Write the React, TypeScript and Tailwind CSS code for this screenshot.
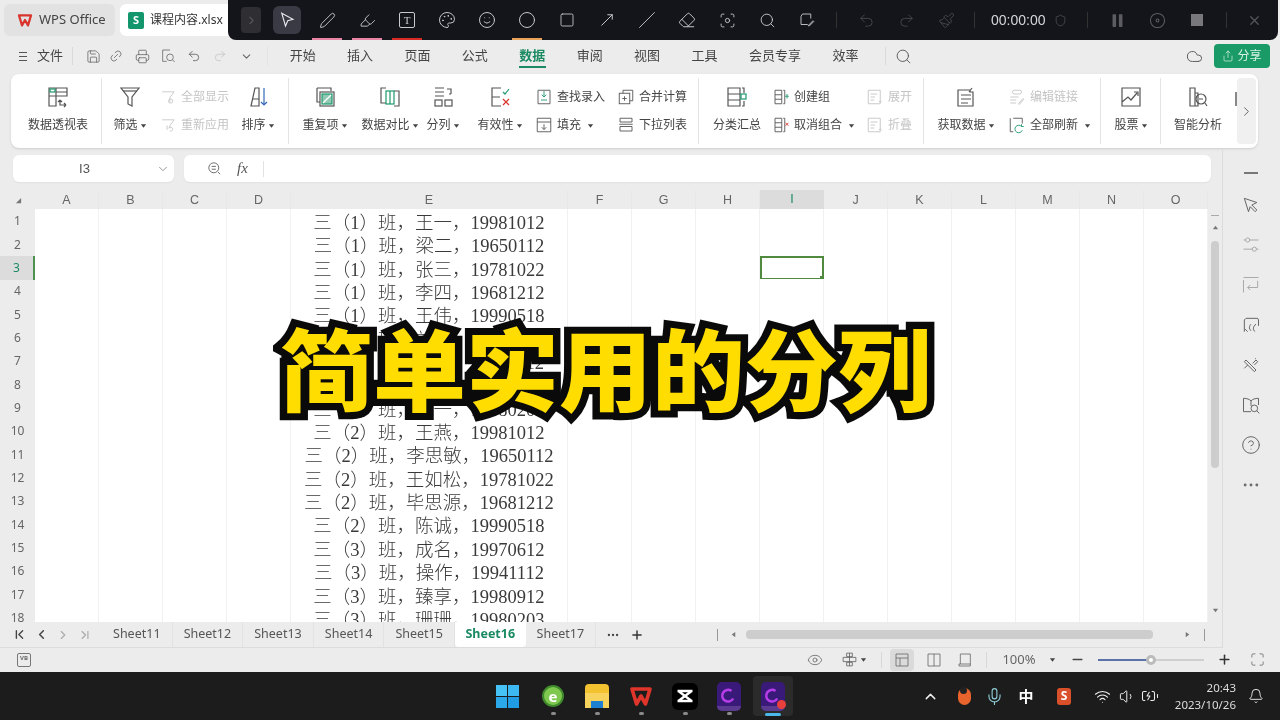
import type { ReactNode } from 'react';
import {
  Bell, ChevronDown, ChevronFirst, ChevronLast, ChevronLeft, ChevronRight, ChevronUp, Circle, CircleHelp, Eye, Focus, Maximize,
  Mic, Minus, MoveUpRight, Palette, Paintbrush, Pause, Pen, Plus, Printer, Redo2, Save, Search, Share, Shield,
  Slash, Smile, Square, Undo2, Volume1, Wifi, X, Highlighter, Eraser, Disc, Link2, Ellipsis, BatteryCharging, Cloud,
} from 'lucide-react';

const Ico = ({ children, s = 24, className = '' }: { children: ReactNode; s?: number; className?: string }) => (
  <svg viewBox="0 0 24 24" width={s} height={s} fill="none" stroke="currentColor" strokeWidth={1.2} className={className}>
    {children}
  </svg>
);

const Caret = () => (
  <svg viewBox="0 0 8 8" width={7} height={7} className="ml-[2px] shrink-0 text-[#444]">
    <path d="M1 2.5h6L4 6.5z" fill="currentColor" />
  </svg>
);

const Large = ({ w, icon, label, caret }: { w: string; icon: ReactNode; label: string; caret?: boolean }) => (
  <div className={`${w} shrink-0 flex flex-col items-center`}>
    <div className="h-[24px] mt-[7px] flex items-center justify-center text-[#555]">{icon}</div>
    <div className="mt-[8px] flex items-center text-[12px] leading-[16px] text-[#444] whitespace-nowrap">
      {label}
      {caret && <Caret />}
    </div>
  </div>
);

const Small = ({ icon, label, caret, off }: { icon: ReactNode; label: string; caret?: boolean; off?: boolean }) => (
  <div className={`h-[28px] flex items-center gap-[4px] whitespace-nowrap text-[12px] ${off ? 'text-[#c4c4c4]' : 'text-[#444]'}`}>
    <span className={`w-[18px] flex justify-center ${off ? 'text-[#c4c4c4]' : 'text-[#555]'}`}>{icon}</span>
    {label}
    {caret && <Caret />}
  </div>
);

const Stack = ({ w, pl, children }: { w: string; pl: string; children: ReactNode }) => (
  <div className={`${w} ${pl} shrink-0 flex flex-col pt-[5px]`}>{children}</div>
);

const Group = ({ w, last, children }: { w: string; last?: boolean; children: ReactNode }) => (
  <div className={`${w} shrink-0 h-[66px] self-center flex ${last ? '' : 'border-r border-[#e4e4e4]'}`}>{children}</div>
);

const Pivot = () => (
  <Ico>
    <path d="M3 3h18v8H3zM3 3v18h7V3M10 7h11M14 15v5h6M20 20l-2-2M20 20l-2 2M14 15l2 2M14 15l-2 2" />
    <rect x="4" y="4" width="5" height="3" stroke="#1d9a6c" />
  </Ico>
);
const Funnel = ({ extra }: { extra?: ReactNode }) => (
  <Ico>
    <path d="M3 3h18l-7 9v9l-4-2v-7z" />
    {extra}
  </Ico>
);
const ColBars = ({ extra }: { extra: ReactNode }) => (
  <Ico s={20}>
    <path d="M4 3h9v18H4zM4 9h9M4 15h9M15 3h2v18h-2" />
    {extra}
  </Ico>
);
const Doc = ({ extra }: { extra: ReactNode }) => (
  <Ico s={18}>
    <path d="M3 3h16v18H3zM6 8h9M6 12h6M6 16h5" />
    {extra}
  </Ico>
);

const rows = [
  '三（1）班，王一，19981012', '三（1）班，梁二，19650112', '三（1）班，张三，19781022', '三（1）班，李四，19681212',
  '三（1）班，王伟，19990518', '三（1）班，刘洋，19970612', '三（2）班，赵敏，19941112', '三（2）班，孙立，19980912',
  '三（2）班，丁一，19980203', '三（2）班，王燕，19981012', '三（2）班，李思敏，19650112', '三（2）班，王如松，19781022',
  '三（2）班，毕思源，19681212', '三（2）班，陈诚，19990518', '三（3）班，成名，19970612', '三（3）班，操作，19941112',
  '三（3）班，臻享，19980912', '三（3）班，珊珊，19980203',
];
const cols = ['A', 'B', 'C', 'D', 'E', 'F', 'G', 'H', 'I', 'J', 'K', 'L', 'M', 'N', 'O'];
const gridCols = 'grid grid-cols-[35px_64px_64px_64px_64px_277px_64px_64px_64px_64px_64px_64px_64px_64px_64px_64px]';
const sheets = ['Sheet11', 'Sheet12', 'Sheet13', 'Sheet14', 'Sheet15', 'Sheet16', 'Sheet17'];
const menus: [string, string][] = [
  ['开始', 'w-[57.4px]'], ['插入', 'w-[57.4px]'], ['页面', 'w-[57.4px]'], ['公式', 'w-[57.4px]'], ['数据', 'w-[57.4px]'],
  ['审阅', 'w-[57.4px]'], ['视图', 'w-[57.4px]'], ['工具', 'w-[57.4px]'], ['会员专享', 'w-[84px]'], ['效率', 'w-[57px]'],
];

const Tool = ({ children, mark }: { children: ReactNode; mark?: string }) => (
  <div className="relative w-[40px] h-[40px] flex items-center justify-center">
    {children}
    {mark && <span className={`absolute bottom-0 left-[5px] right-[5px] h-[2px] ${mark}`} />}
  </div>
);

const TopBar = () => (
  <div className="absolute left-[228px] top-0 w-[1050px] h-[40px] bg-[#14141b] rounded-b-lg flex items-center pl-[13px] text-[#c9c9cf]">
    <div className="w-[20px] h-[26px] mr-[6px] rounded bg-[#2e2e33] flex items-center justify-center text-[#55555a]">
      <ChevronRight size={13} />
    </div>
    <div className="w-[40px] h-[40px] flex items-center justify-center">
      <div className="w-[28px] h-[28px] rounded-md bg-[#3a3a44] flex items-center justify-center">
        <svg viewBox="0 0 24 24" width={18} height={18} fill="none" stroke="#e8e8ee" strokeWidth={1.5}><path d="M5 3l15 8-7 2-3 7z" /></svg>
      </div>
    </div>
    <Tool mark="bg-[#e986a6]"><Pen size={17} strokeWidth={1.3} /></Tool>
    <Tool mark="bg-[#e986a6]"><Highlighter size={17} strokeWidth={1.3} /></Tool>
    <Tool mark="bg-[#d92b25]">
      <div className="w-[16px] h-[16px] border border-[#c9c9cf] rounded-[2px] flex items-center justify-center text-[11px] leading-none font-['Liberation_Serif',serif]">T</div>
    </Tool>
    <Tool><Palette size={18} strokeWidth={1.3} /></Tool>
    <Tool><Smile size={18} strokeWidth={1.3} /></Tool>
    <Tool mark="bg-[#e9a45a]"><Circle size={18} strokeWidth={1.3} /></Tool>
    <Tool><Square size={16} strokeWidth={1.3} /></Tool>
    <Tool><MoveUpRight size={18} strokeWidth={1.3} /></Tool>
    <Tool><Slash size={18} strokeWidth={1.2} /></Tool>
    <Tool><Eraser size={18} strokeWidth={1.3} /></Tool>
    <Tool><Focus size={17} strokeWidth={1.3} /></Tool>
    <Tool><Search size={17} strokeWidth={1.3} /></Tool>
    <Tool>
      <Ico s={18}><path d="M6 4h11v6M6 4 4 7v11h9M14 19l6-6 1 1-6 6h-1z" /></Ico>
    </Tool>
    <div className="w-px h-[16px] bg-[#333] mx-[9px]" />
    <div className="flex text-[#47474d]">
      <Tool><Undo2 size={17} strokeWidth={1.3} /></Tool>
      <Tool><Redo2 size={17} strokeWidth={1.3} /></Tool>
      <Tool><Paintbrush size={17} strokeWidth={1.3} /></Tool>
    </div>
    <div className="w-px h-[16px] bg-[#333] ml-[8px] mr-[16px]" />
    <span className="text-[14px] text-[#d6d6da] font-['Liberation_Sans',sans-serif] w-[58px]">00:00:00</span>
    <Shield size={13} className="ml-[5px] text-[#55555a]" strokeWidth={1.3} />
    <div className="w-px h-[16px] bg-[#333] ml-[20px] mr-[9px]" />
    <div className="flex text-[#5c5c62]">
      <Tool><Pause size={17} fill="currentColor" strokeWidth={0} /></Tool>
      <Tool><Disc size={17} strokeWidth={1.5} /></Tool>
      <Tool><div className="w-[12px] h-[12px] bg-[#77777c]" /></Tool>
    </div>
    <div className="w-px h-[16px] bg-[#333] ml-[9px] mr-[7px]" />
    <Tool><X size={15} className="text-[#55555a]" /></Tool>
  </div>
);

const TitleRow = () => (
  <div className="h-[38px] flex items-end pl-[4px] gap-[5px]">
    <div className="w-[111px] h-[32px] mb-[2px] bg-[#e2e2e2] rounded-md flex items-center pl-[13px] gap-[6px] text-[13px] text-[#444]">
      <svg viewBox="0 0 24 24" width={16} height={16} fill="none" stroke="#d9352d" strokeWidth={3.4} strokeLinejoin="round"><path d="M3 5h18l-4.5 15-4.5-8-4.5 8z" /></svg>
      WPS Office
    </div>
    <div className="w-[115px] h-[32px] mb-[2px] bg-white rounded-md flex items-center pl-[8px] gap-[6px] text-[12px] text-[#333]">
      <div className="w-[16px] h-[17px] rounded-[2px] bg-[#14966d] text-white text-[11px] font-bold flex items-center justify-center">S</div>
      课程内容.xlsx
    </div>
  </div>
);

const MenuRow = () => (
  <div className="h-[36px] flex items-center relative text-[13px] text-[#444]">
    <div className="w-[18px] ml-[19px] flex flex-col gap-[3px]">
      <span className="w-[8px] h-px bg-[#555]" /><span className="w-[8px] h-px bg-[#555]" /><span className="w-[8px] h-px bg-[#555]" />
    </div>
    <span className="w-[35px]">文件</span>
    <div className="w-px h-[18px] bg-[#dadada]" />
    <div className="flex items-center text-[#666]">
      <span className="w-[20px] ml-[10px] flex justify-center"><Save size={15} strokeWidth={1.3} /></span>
      <span className="w-[26px] flex justify-center"><Link2 size={14} strokeWidth={1.3} className="-rotate-45" /></span>
      <span className="w-[26px] flex justify-center"><Printer size={15} strokeWidth={1.3} /></span>
      <span className="w-[26px] flex justify-center">
        <Ico s={16}><path d="M15 3H4v17h6" /><circle cx="15" cy="14" r="5" /><path d="m19 18 3 3" /></Ico>
      </span>
      <span className="w-[26px] flex justify-center"><Undo2 size={14} strokeWidth={1.5} /></span>
      <span className="w-[26px] flex justify-center text-[#c2c2c2]"><Redo2 size={14} strokeWidth={1.3} /></span>
      <span className="w-[26px] flex justify-center"><ChevronDown size={13} /></span>
    </div>
    <div className="w-px h-[18px] bg-[#e2e2e2] ml-[8px] mr-[6px]" />
    {menus.map(([m, w]) => (
      <div key={m} className={`${w} h-full relative flex items-center justify-center ${m === '数据' ? 'text-[#1a8a63] font-bold' : ''}`}>
        {m}
        {m === '数据' && <span className="absolute bottom-[6px] left-[15px] w-[27px] h-[2px] bg-[#1a8a63]" />}
      </div>
    ))}
    <div className="w-px h-[18px] bg-[#dadada] ml-[11px]" />
    <Search size={17} strokeWidth={1.3} className="ml-[9px] text-[#555]" />
    <div className="ml-auto flex items-center gap-[11px] pr-[10px]">
      <Cloud size={17} strokeWidth={1.3} className="text-[#555]" />
      <div className="w-[56px] h-[24px] rounded bg-[#199a67] text-[#d9f2e6] text-[12px] flex items-center justify-center gap-[3px]">
        <Share size={12} strokeWidth={1.4} />分享
      </div>
    </div>
  </div>
);

const Ribbon = () => (
  <div className="mx-[11px] w-[1247px] h-[74px] bg-white rounded-lg shadow-sm flex">
    <Group w="w-[91px]">
      <Large w="w-[96px] -ml-[1px] -mr-[4px]" icon={<Pivot />} label="数据透视表" />
    </Group>
    <Group w="w-[187px]">
      <Large w="w-[56px]" icon={<Funnel extra={<path d="M5 6h14" />} />} label="筛选" caret />
      <Stack w="w-[76px]" pl="pl-[1px]">
        <Small off icon={<Ico s={17}><path d="M3 4h17l-6 8v7" /><circle cx="15" cy="17" r="3" /></Ico>} label="全部显示" />
        <Small off icon={<Ico s={17}><path d="M3 4h17l-6 8v4M10 12v6" /><path d="M14 20a3 3 0 1 0-2-4" /></Ico>} label="重新应用" />
      </Stack>
      <Large w="w-[48px]" icon={<Ico><path d="M9 3h4v18H5zM6 14h7" /><path d="M18 3v17M15 17l3 3 3-3" stroke="#3569b8" /></Ico>} label="排序" caret />
    </Group>
    <Group w="w-[410px]">
      <Large w="w-[72px]" icon={<Ico><path d="M4 3h14v3M4 3v14h3" /><rect x="7" y="7" width="14" height="14" /><rect x="9" y="9" width="10" height="10" fill="#8fc9b3" stroke="#1d9a6c" /><path d="m10 18 8-8" stroke="#fff" /></Ico>} label="重复项" caret />
      <Large w="w-[58px]" icon={<Ico><path d="M8 3H3v15h5M16 6h5v15h-5" /><rect x="8" y="6" width="8" height="13" stroke="#1d9a6c" /><path d="M12 6v13" stroke="#1d9a6c" /></Ico>} label="数据对比" caret />
      <Large w="w-[48px]" icon={<Ico><path d="M4 3h9M4 7h9M4 11h9M16 4h4v5M18 9h2" /><rect x="4" y="15" width="7" height="6" /><rect x="14" y="15" width="7" height="6" /></Ico>} label="分列" caret />
      <Large w="w-[66px]" icon={<Ico><path d="M13 3H4v18h9M4 12h8" /><path d="m15 7 2 2 4-5" stroke="#1d9a6c" /><path d="m15 14 6 6M21 14l-6 6" stroke="#d9352d" /></Ico>} label="有效性" caret />
      <Stack w="w-[82px]" pl="pl-[2px]">
        <Small icon={<Ico s={18}><path d="M4 3h16v18H4z" /><path d="M12 4v8M9 9l3 3 3-3M8 16h8" stroke="#1d9a6c" /></Ico>} label="查找录入" />
        <Small icon={<Ico s={18}><path d="M3 3h18v18H3zM3 8h18M12 11v7M9 15l3 3 3-3" /></Ico>} label="填充" caret />
      </Stack>
      <Stack w="w-[84px]" pl="pl-[2px]">
        <Small icon={<Ico s={18}><path d="M8 7V3h13v14h-4" /><rect x="3" y="7" width="14" height="14" /><path d="M10 11v6M7 14h6" /></Ico>} label="合并计算" />
        <Small icon={<Ico s={18}><path d="M4 3h16v5H4zM3 11h18M4 14h16v6H4z" /></Ico>} label="下拉列表" />
      </Stack>
    </Group>
    <Group w="w-[225px]">
      <Large w="w-[76px]" icon={<Ico><path d="M3 3h12v18H3zM3 9h12M3 15h12M17 3h2v5M19 16v5h-2" /><rect x="16" y="9" width="5" height="5" stroke="#1d9a6c" /></Ico>} label="分类汇总" />
      <Stack w="w-[94px] -ml-[3px]" pl="pl-[0px]">
        <Small icon={<ColBars extra={<path d="M20 8v6M17.5 11h5" stroke="#1d9a6c" />} />} label="创建组" />
        <Small icon={<ColBars extra={<path d="m18 9 4 4M22 9l-4 4" stroke="#d9352d" />} />} label="取消组合" caret />
      </Stack>
      <Stack w="w-[58px]" pl="pl-[0px]">
        <Small off icon={<Doc extra={<path d="m17 17 2 2 2-2" />} />} label="展开" />
        <Small off icon={<Doc extra={<path d="m17 19 2-2 2 2" />} />} label="折叠" />
      </Stack>
    </Group>
    <Group w="w-[177px]">
      <Large w="w-[84px]" icon={<Ico><path d="M4 5h12v2h3v14H4zM7 10h10M7 14h10M7 18h7M15 7l3-4" /></Ico>} label="获取数据" caret />
      <Stack w="w-[93px]" pl="pl-[0px]">
        <Small off icon={<Ico s={18}><rect x="6" y="3" width="12" height="5" rx="2.5" /><path d="M3 12h11M3 16h8M3 20h8M14 21l6-7 1 1-6 7z" /></Ico>} label="编辑链接" />
        <Small icon={<Ico s={18}><path d="M3 3v18h4M7 3h12v7" /><path d="M18 14a5 5 0 1 0 1 5M18 11v3h3" stroke="#1d9a6c" /></Ico>} label="全部刷新" caret />
      </Stack>
    </Group>
    <Group w="w-[60px]">
      <Large w="w-[60px]" icon={<Ico><path d="M3 3h18v18H3zM3 17l6-5 3 3 6-7M15 7h4v4" /></Ico>} label="股票" caret />
    </Group>
    <Group w="w-[76px]" last>
      <Large w="w-[74px]" icon={<Ico><path d="M4 3h5v18H4zM9 8h3v13H9" /><circle cx="15" cy="14" r="5" /><path d="M13 14h4M19 18l2 3" /></Ico>} label="智能分析" />
      <div className="w-[2px] h-[14px] mt-[14px] bg-[#888]" />
    </Group>
    <div className="w-[19px] h-[66px] self-center bg-[#f0f0f0] rounded flex items-center justify-center text-[#555]">
      <ChevronRight size={15} strokeWidth={1.4} />
    </div>
  </div>
);

const FormulaRow = () => (
  <div className="flex h-[27px] mt-[7px] ml-[13px] gap-[10px] text-[#555]">
    <div className="w-[161px] bg-white rounded-md shadow-xs relative flex items-center justify-center pr-[18px] text-[13px] font-['Liberation_Sans',sans-serif]">
      I3
      <ChevronDown size={14} strokeWidth={1.3} className="absolute right-[4px] text-[#777]" />
    </div>
    <div className="w-[1027px] bg-white rounded-md shadow-xs flex items-center pl-[22px]">
      <Ico s={17}><circle cx="11" cy="11" r="7" /><path d="M8 9h6M8 13h6M17 17l3 3" /></Ico>
      <span className="ml-[14px] w-[26px] italic text-[15px] font-['Liberation_Serif',serif]">fx</span>
      <span className="w-px h-[16px] bg-[#e2e2e2]" />
    </div>
  </div>
);

const Sheet = () => (
  <div className="flex flex-col">
    <div className={`${gridCols} h-[19px] mt-[8px] text-[12.5px] text-[#666] items-stretch font-['Liberation_Sans',sans-serif]`}>
      <div className="flex items-center justify-center pl-[2px]">
        <svg viewBox="0 0 8 8" width={7} height={7}><path d="M7 1v6H1z" fill="#777" /></svg>
      </div>
      {cols.map((c) => (
        <div key={c} className={c === 'I' ? 'flex items-center justify-center bg-[#dcdcdc] text-[#1a8a63] border-b-2 border-[#4f9150]' : 'flex items-center justify-center border-r border-[#e8e8e8]'}>{c}</div>
      ))}
    </div>
    <div className="h-[413px] overflow-hidden">
      {rows.map((r, i) => (
        <div key={r} className={`${gridCols} h-[23.35px]`}>
          <div className={`flex items-center justify-center text-[12px] font-['Noto_Sans',sans-serif] ${i === 2 ? 'bg-[#dcdcdc] text-[#1a8a63] border-r-2 border-[#4f9150]' : 'text-[#666]'}`}>{i + 1}</div>
          {cols.map((c) => (
            <div key={c} className={i === 2 && c === 'I' ? 'relative bg-white border-2 border-[#4f8a3f]' : 'relative bg-white border-r border-b border-[#f1f1f1]'}>
              {c === 'E' && (
                <div className="h-full pt-[5px] flex items-center justify-center text-[18.5px] leading-none whitespace-nowrap font-light text-[#3a3a3a] font-['Liberation_Serif','Noto_Sans_CJK_SC',serif]">{r}</div>
              )}
              {i === 2 && c === 'I' && <span className="absolute -right-[2px] -bottom-[2px] w-[4px] h-[4px] bg-[#4f8a3f]" />}
            </div>
          ))}
        </div>
      ))}
    </div>
  </div>
);

const VScroll = () => (
  <div className="w-[14px] mt-[8px] flex flex-col items-center text-[#777]">
    <div className="h-[18px]" />
    <span className="w-[8px] h-px bg-[#aaa] mt-[7px]" />
    <svg viewBox="0 0 8 8" width={7} height={7} className="mt-[8px]"><path d="M1 6h6L4 2z" fill="currentColor" /></svg>
    <div className="w-[8px] h-[227px] mt-[10px] rounded bg-[#cdcdcd]" />
    <svg viewBox="0 0 8 8" width={7} height={7} className="mt-[139px]"><path d="M1 2h6L4 6z" fill="currentColor" /></svg>
  </div>
);

const SheetTabs = () => (
  <div className="h-[26px] flex items-center border-b border-[#dcdcdc] text-[12.5px] text-[#555] font-['Noto_Sans',sans-serif]">
    <div className="w-[102px] flex items-center pl-[8px]">
      <span className="w-[22px] flex justify-center text-[#444]"><ChevronFirst size={15} strokeWidth={2.2} /></span>
      <span className="w-[22px] flex justify-center text-[#444]"><ChevronLeft size={15} strokeWidth={2.4} /></span>
      <span className="w-[22px] flex justify-center text-[#aaa]"><ChevronRight size={14} /></span>
      <span className="w-[22px] flex justify-center text-[#aaa]"><ChevronLast size={14} /></span>
    </div>
    {sheets.map((s) => (
      <div key={s} className={`w-[70.6px] h-full flex items-center justify-center ${s === 'Sheet16' ? 'bg-white rounded-b text-[#1a8a63] font-bold' : 'border-r border-[#e2e2e2]'}`}>{s}</div>
    ))}
    <Ellipsis size={14} className="ml-[10px] text-[#444]" />
    <Plus size={14} strokeWidth={2.5} className="ml-[10px] text-[#333]" />
    <span className="w-px h-[12px] bg-[#999] ml-[73px]" />
    <svg viewBox="0 0 8 8" width={7} height={7} className="ml-[12px]"><path d="M6 1v6L2 4z" fill="#777" /></svg>
    <div className="w-[407px] h-[9px] ml-[9px] rounded bg-[#cdcdcd]" />
    <svg viewBox="0 0 8 8" width={7} height={7} className="ml-[31px]"><path d="M2 1v6l4-3z" fill="#777" /></svg>
    <span className="w-px h-[12px] bg-[#999] ml-[13px]" />
  </div>
);

const SidePanel = () => (
  <div className="w-[57px] border-l border-[#dcdcdc] flex flex-col items-center text-[#666]">
    <span className="w-[14px] h-[1.5px] bg-[#777] mt-[24px]" />
    <div className="mt-[11px] flex flex-col">
      {[
        <Ico s={20}><path d="M4 4l15 5-6 3 6 6-2 2-6-6-2 6z" /></Ico>,
        <Ico s={20} className="text-[#aaa]"><path d="M3 6h18M3 17h18" /><circle cx="8" cy="6" r="2.5" fill="#ececec" /><circle cx="16" cy="17" r="2.5" fill="#ececec" /></Ico>,
        <Ico s={20} className="text-[#aaa]"><path d="M3 3h18M3 6v15M20 7v8H8M11 12l-3 3 3 3" /></Ico>,
        <Ico s={20}><path d="M4 20V6l2-2h14l1 2v7M8 20l-3-3M12 19c-3-3-2-6 0-8M17 20c-3-2-3-6 1-9" /></Ico>,
        <Ico s={20}><path d="m6 6 12 12-2 2L4 8zM14 10l4-4 2 2-4 4M4 16l4-4M17 4l1 1" /></Ico>,
        <Ico s={20}><path d="M3 4c4 0 7 1 9 3 2-2 5-3 9-3v8M12 7v6M3 4v16h9" /><circle cx="16" cy="16" r="4" /><path d="m19 19 3 3" /></Ico>,
        <CircleHelp size={20} strokeWidth={1.2} />,
        <Ellipsis size={20} strokeWidth={1.4} />,
      ].map((ic, i) => (
        <div key={i} className="h-[40px] flex items-center justify-center">{ic}</div>
      ))}
    </div>
  </div>
);

const StatusBar = () => (
  <div className="h-[22px] pt-[1px] flex items-center text-[#666] text-[13px] font-['Noto_Sans',sans-serif]">
    <div className="w-[14px] h-[14px] ml-[17px] border border-[#777] rounded-[2px] text-[6px] leading-none font-bold flex justify-center pt-[1px]">VB</div>
    <Eye size={16} strokeWidth={1.2} className="ml-[776px]" />
    <Ico s={17} className="ml-[18px]"><path d="M8 3h8v5H8zM8 16h8v5H8zM3 9h18v6H3zM12 3v18" /></Ico>
    <Caret />
    <span className="w-px h-[16px] bg-[#d8d8d8] ml-[14px] mr-[8px]" />
    <div className="w-[24px] h-[22px] rounded bg-[#dadada] flex items-center justify-center">
      <Ico s={16}><path d="M3 3h18v18H3zM3 9h18M9 9v12" /></Ico>
    </div>
    <span className="w-[32px] flex justify-center ml-[4px]"><Ico s={16}><path d="M3 3h18v18H3zM12 3v18" /></Ico></span>
    <span className="w-[30px] flex justify-center"><Ico s={16}><path d="M5 3h15v15H3v3h17v-3M5 3v15" /></Ico></span>
    <span className="w-px h-[16px] bg-[#d8d8d8] ml-[6px]" />
    <span className="ml-[15px] w-[34px] text-center">100%</span>
    <span className="ml-[11px]"><Caret /></span>
    <Minus size={15} strokeWidth={2.2} className="ml-[14px] text-[#444]" />
    <div className="ml-[13px] w-[106px] h-[2px] bg-[#cfcfcf] relative">
      <div className="w-[53px] h-[2px] bg-[#5b73a8]" />
      <span className="absolute left-[48px] -top-[4px] w-[10px] h-[10px] rounded-full bg-white border-[3px] border-[#bbb]" />
    </div>
    <Plus size={15} strokeWidth={2.4} className="ml-[13px] text-[#333]" />
    <Maximize size={15} strokeWidth={1.3} className="ml-[18px]" />
  </div>
);

const AppIcon = ({ active }: { active?: boolean }) => (
  <div className={`relative w-[40px] h-[40px] mx-[2px] rounded flex items-center justify-center ${active ? 'bg-[#2b2b2b]' : ''}`}>
    <div className="relative w-[24px] h-[29px] rounded-[5px] bg-[#3a1a78] flex items-center justify-center">
      <svg viewBox="0 0 24 24" width={20} height={20} fill="none" stroke="#b83dea" strokeWidth={3}><path d="M15 6a7 7 0 1 0 2 9" /></svg>
      <span className="absolute bottom-0 inset-x-0 h-[5px] bg-[#5b3a90] rounded-b-[5px]" />
    </div>
    {active && <span className="absolute right-[7px] bottom-[7px] w-[9px] h-[9px] rounded-full bg-[#e8403c]" />}
    {active && <span className="absolute bottom-0 left-1/2 -translate-x-1/2 h-[3px] w-[16px] rounded bg-[#4ab8e8]" />}
  </div>
);

const Slot = ({ children, dot = true }: { children: ReactNode; dot?: boolean }) => (
  <div className="relative w-[44px] h-[48px] flex items-center justify-center">
    {children}
    {dot && <span className="absolute bottom-[5px] w-[5px] h-[3px] rounded bg-[#8a8a8a]" />}
  </div>
);

const Taskbar = () => (
  <div className="h-[48px] mt-[2px] bg-[#1c1c1c] flex items-center text-[#eee]">
    <div className="ml-[487px] flex">
      <Slot dot={false}>
        <div className="grid grid-cols-2 gap-[1px] w-[23px] h-[23px] mr-[4px]">
          <span className="bg-[#46c2f5]" /><span className="bg-[#3cb8f2]" /><span className="bg-[#2aa8ea]" /><span className="bg-[#209ce4]" />
        </div>
      </Slot>
      <Slot>
        <div className="w-[22px] h-[22px] rounded-full bg-[#7ec850] border-2 border-[#3f8a2c] text-white font-bold text-[15px] leading-none flex items-center justify-center">e</div>
      </Slot>
      <Slot>
        <div className="relative w-[24px] h-[24px] rounded-sm bg-[#f2c230]">
          <span className="absolute bottom-0 inset-x-0 h-[15px] bg-[#f7d35e]" />
          <span className="absolute bottom-0 left-[6px] w-[12px] h-[7px] bg-[#1f7fd0]" />
        </div>
      </Slot>
      <Slot>
        <svg viewBox="0 0 24 24" width={24} height={24} fill="none" stroke="#e0352b" strokeWidth={3.6} strokeLinejoin="round"><path d="M3 5h18l-4.5 15-4.5-8-4.5 8z" /></svg>
      </Slot>
      <Slot>
        <div className="w-[26px] h-[27px] rounded-md bg-black flex items-center justify-center">
          <svg viewBox="0 0 24 24" width={20} height={20} fill="none" stroke="#fff" strokeWidth={2.8} strokeLinejoin="round"><path d="M3 6h18M3 18h18M4 6l16 12M20 6 4 18" /></svg>
        </div>
      </Slot>
      <Slot><AppIcon /></Slot>
      <Slot dot={false}><AppIcon active /></Slot>
    </div>
    <div className="ml-[125px] w-[20px] flex justify-center"><ChevronUp size={17} strokeWidth={2} /></div>
    <div className="ml-[15px] w-[18px] flex justify-center">
      <div className="relative w-[13px] h-[17px] rounded-full bg-[#e8642c]"><span className="absolute -top-[1px] left-[2px] w-[7px] h-[7px] rounded-full bg-[#222]" /></div>
    </div>
    <Mic size={19} strokeWidth={1.4} className="ml-[12px] text-[#8ecfd8]" />
    <span className="ml-[12px] w-[20px] text-[15px] font-bold text-center text-white">中</span>
    <div className="ml-[21px] w-[14px] h-[17px] rounded-[3px] bg-[#d9502a] text-white text-[12px] font-bold flex items-center justify-center">S</div>
    <Wifi size={17} strokeWidth={1.5} className="ml-[23px]" />
    <Volume1 size={17} strokeWidth={1.4} className="ml-[8px]" />
    <BatteryCharging size={18} strokeWidth={1.4} className="ml-[5px]" />
    <div className="ml-auto flex flex-col items-end text-[11.5px] leading-[17px] text-[#ddd] font-['Noto_Sans',sans-serif]">
      <span>20:43</span>
      <span>2023/10/26</span>
    </div>
    <Bell size={16} strokeWidth={1.4} className="ml-[12px] mr-[16px]" />
  </div>
);

export default function App() {
  return (
    <div className="relative w-[1280px] h-[720px] overflow-hidden bg-[#ececec] font-['Noto_Sans','Noto_Sans_CJK_SC',sans-serif] blur-[0.3px]">
      <TitleRow />
      <MenuRow />
      <Ribbon />
      <div className="flex h-[500px]">
        <div className="w-[1222px] shrink-0">
          <FormulaRow />
          <div className="flex">
            <Sheet />
            <VScroll />
          </div>
          <SheetTabs />
        </div>
        <SidePanel />
      </div>
      <StatusBar />
      <Taskbar />
      <TopBar />
      {/* big caption on top of the sheet */}
      <div className="absolute left-[280px] top-[304px] scale-y-[0.95] whitespace-nowrap text-[93px] leading-[124px] font-black text-[#ffdd00] [-webkit-text-stroke:15px_#0a0a0a] [paint-order:stroke_fill] font-['Noto_Sans_CJK_SC',sans-serif]">
        简单实用的分列
      </div>
    </div>
  );
}
